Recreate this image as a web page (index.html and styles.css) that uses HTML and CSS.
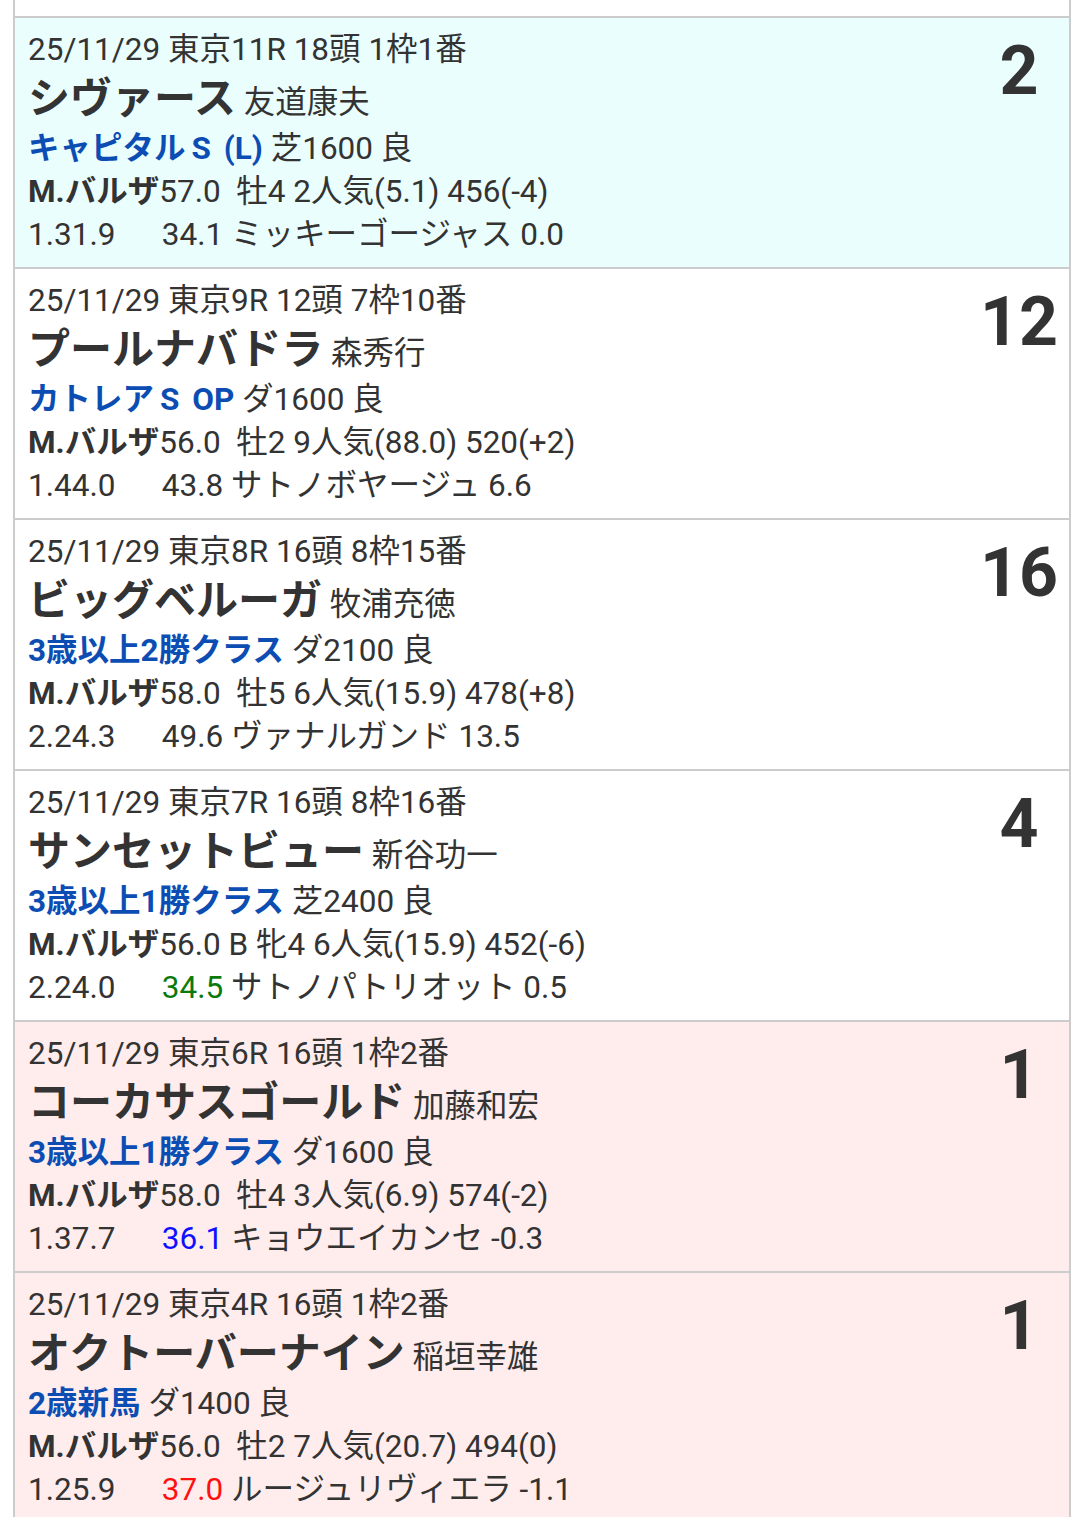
FILE: index.html
```html
<!DOCTYPE html>
<html lang="ja">
<head>
<meta charset="utf-8">
<title>出走履歴</title>
<link rel="stylesheet" href="styles.css">
</head>
<body>
<div class="list">
  <div class="card partial"></div>

  <div class="card cyan">
    <div class="info">
      <div class="line">25/11/29 東京11R 18頭 1枠1番</div>
      <div class="name-line"><span class="horse">シヴァース</span> 友道康夫</div>
      <div class="line"><span class="race">キャピタル<span class="grade">S (L)</span></span> 芝1600 良</div>
      <div class="line"><span class="jockey">M.バルザ</span>57.0&nbsp; 牡4 2人気(5.1) 456(-4)</div>
      <div class="line"><span class="time">1.31.9</span> <span>34.1</span> ミッキーゴージャス 0.0</div>
    </div>
    <div class="rank">2</div>
  </div>

  <div class="card">
    <div class="info">
      <div class="line">25/11/29 東京9R 12頭 7枠10番</div>
      <div class="name-line"><span class="horse">プールナバドラ</span> 森秀行</div>
      <div class="line"><span class="race">カトレア<span class="grade">S OP</span></span> ダ1600 良</div>
      <div class="line"><span class="jockey">M.バルザ</span>56.0&nbsp; 牡2 9人気(88.0) 520(+2)</div>
      <div class="line"><span class="time">1.44.0</span> <span>43.8</span> サトノボヤージュ 6.6</div>
    </div>
    <div class="rank">12</div>
  </div>

  <div class="card">
    <div class="info">
      <div class="line">25/11/29 東京8R 16頭 8枠15番</div>
      <div class="name-line"><span class="horse">ビッグベルーガ</span> 牧浦充徳</div>
      <div class="line"><span class="race">3歳以上2勝クラス</span> ダ2100 良</div>
      <div class="line"><span class="jockey">M.バルザ</span>58.0&nbsp; 牡5 6人気(15.9) 478(+8)</div>
      <div class="line"><span class="time">2.24.3</span> <span>49.6</span> ヴァナルガンド 13.5</div>
    </div>
    <div class="rank">16</div>
  </div>

  <div class="card">
    <div class="info">
      <div class="line">25/11/29 東京7R 16頭 8枠16番</div>
      <div class="name-line"><span class="horse">サンセットビュー</span> 新谷功一</div>
      <div class="line"><span class="race">3歳以上1勝クラス</span> 芝2400 良</div>
      <div class="line"><span class="jockey">M.バルザ</span>56.0 B 牝4 6人気(15.9) 452(-6)</div>
      <div class="line"><span class="time">2.24.0</span> <span class="last-green">34.5</span> サトノパトリオット 0.5</div>
    </div>
    <div class="rank">4</div>
  </div>

  <div class="card pink">
    <div class="info">
      <div class="line">25/11/29 東京6R 16頭 1枠2番</div>
      <div class="name-line"><span class="horse">コーカサスゴールド</span> 加藤和宏</div>
      <div class="line"><span class="race">3歳以上1勝クラス</span> ダ1600 良</div>
      <div class="line"><span class="jockey">M.バルザ</span>58.0&nbsp; 牡4 3人気(6.9) 574(-2)</div>
      <div class="line"><span class="time">1.37.7</span> <span class="last-blue">36.1</span> キョウエイカンセ -0.3</div>
    </div>
    <div class="rank">1</div>
  </div>

  <div class="card pink">
    <div class="info">
      <div class="line">25/11/29 東京4R 16頭 1枠2番</div>
      <div class="name-line"><span class="horse">オクトーバーナイン</span> 稲垣幸雄</div>
      <div class="line"><span class="race">2歳新馬</span> ダ1400 良</div>
      <div class="line"><span class="jockey">M.バルザ</span>56.0&nbsp; 牡2 7人気(20.7) 494(0)</div>
      <div class="line"><span class="time">1.25.9</span> <span class="last-red">37.0</span> ルージュリヴィエラ -1.1</div>
    </div>
    <div class="rank">1</div>
  </div>
</div>
</body>
</html>
```

FILE: styles.css
```css
html, body {
  margin: 0;
  padding: 0;
  background: #ffffff;
}

body {
  padding: 0 13px;
  font-family: Roboto, "Noto Sans CJK JP", sans-serif;
  font-size: 31.5px;
  color: #333333;
  overflow: hidden;
  height: 1517px;
}

.list {
  border-left: 2px solid #cccccc;
  border-right: 2px solid #cccccc;
}

.card {
  display: flex;
  height: 249px;
  border-bottom: 2px solid #cccccc;
  background: #ffffff;
}

.card.partial {
  height: 16px;
}

.card.cyan {
  background: #eafefe;
}

.card.pink {
  background: #ffeded;
}

.info {
  flex: 1;
  padding: 10px 0 0 13px;
  white-space: nowrap;
}

.line {
  height: 43px;
  line-height: 43px;
}

.name-line {
  height: 56px;
  line-height: 56px;
}

.horse {
  font-size: 42px;
  font-weight: 700;
}

.race {
  color: #0c4db4;
  font-weight: 700;
}

.grade {
  margin-left: 6px;
  word-spacing: 5px;
}

.jockey {
  font-weight: 700;
}

.time {
  display: inline-block;
  width: 126px;
}

.last-green {
  color: #0b7a0b;
}

.last-blue {
  color: #1010ff;
}

.last-red {
  color: #ff1010;
}

.rank {
  width: 100px;
  padding-top: 19px;
  text-align: center;
  font-size: 68px;
  line-height: 68px;
  font-weight: 700;
  color: #333333;
}
```
